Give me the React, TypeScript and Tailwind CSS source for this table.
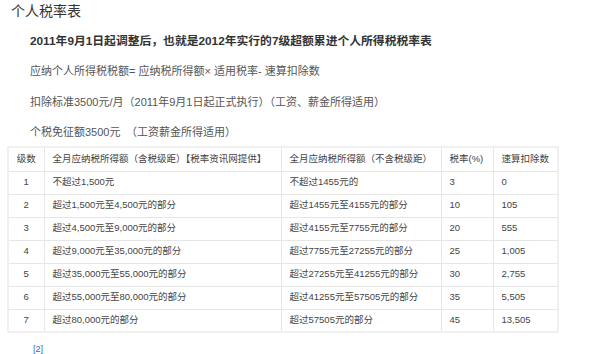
import React from 'react';

const rows = [
  ['1', '不超过1,500元', '不超过1455元的', '3', '0'],
  ['2', '超过1,500元至4,500元的部分', '超过1455元至4155元的部分', '10', '105'],
  ['3', '超过4,500元至9,000元的部分', '超过4155元至7755元的部分', '20', '555'],
  ['4', '超过9,000元至35,000元的部分', '超过7755元至27255元的部分', '25', '1,005'],
  ['5', '超过35,000元至55,000元的部分', '超过27255元至41255元的部分', '30', '2,755'],
  ['6', '超过55,000元至80,000元的部分', '超过41255元至57505元的部分', '35', '5,505'],
  ['7', '超过80,000元的部分', '超过57505元的部分', '45', '13,505'],
];

const cell = 'border border-[#e6e6e6] pl-2 pr-0 text-left align-middle whitespace-nowrap overflow-hidden';

export default function App() {
  return (
    <div
      className="w-[600px] h-[354px] bg-white overflow-hidden text-[#333]"
      style={{ fontFamily: '"Liberation Sans", "Noto Sans CJK SC", sans-serif' }}
    >
      <h1 className="pl-[11px] pt-px text-[14px] leading-[20px] font-normal">个人税率表</h1>

      <p className="pl-[30px] mt-[12px] text-[11.8px] leading-[16px] font-bold">
        2011年9月1日起调整后，也就是2012年实行的7级超额累进个人所得税税率表
      </p>

      <div className="pl-[30px] text-[11px] leading-[16px] text-[#555]">
        <p className="mt-[14px]">应纳个人所得税税额= 应纳税所得额× 适用税率- 速算扣除数</p>
        <p className="mt-[15px]">扣除标准3500元/月（2011年9月1日起正式执行）（工资、薪金所得适用）</p>
        <p className="mt-[14px]">个税免征额3500元{'\u3000'}（工资薪金所得适用）</p>
      </div>

      <div className="pl-[7px] mt-[6px]">
        <table className="table-fixed border-collapse w-[550px] text-[9.5px] text-[#444] border-2 border-[#f0f0f0]">
          <colgroup>
            <col className="w-[36px]" />
            <col className="w-[237px]" />
            <col className="w-[160px]" />
            <col className="w-[52px]" />
            <col className="w-[65px]" />
          </colgroup>
          <thead>
            <tr className="h-[24px]">
              <th className={`${cell} font-normal !text-center !pl-0`}>级数</th>
              <th className={`${cell} font-normal`}>全月应纳税所得额（含税级距）【税率资讯网提供】</th>
              <th className={`${cell} font-normal`}>全月应纳税所得额（不含税级距）</th>
              <th className={`${cell} font-normal`}>税率(%)</th>
              <th className={`${cell} font-normal`}>速算扣除数</th>
            </tr>
          </thead>
          <tbody>
            {rows.map(r => (
              <tr key={r[0]} className="h-[23px]">
                <td className={`${cell} !text-center !pl-0`}>{r[0]}</td>
                <td className={cell}>{r[1]}</td>
                <td className={cell}>{r[2]}</td>
                <td className={cell}>{r[3]}</td>
                <td className={cell}>{r[4]}</td>
              </tr>
            ))}
          </tbody>
        </table>
      </div>

      <div className="pl-[33px] mt-[10px] text-[9px] leading-[12px] text-[#3366cc]">[2]</div>
    </div>
  );
}
